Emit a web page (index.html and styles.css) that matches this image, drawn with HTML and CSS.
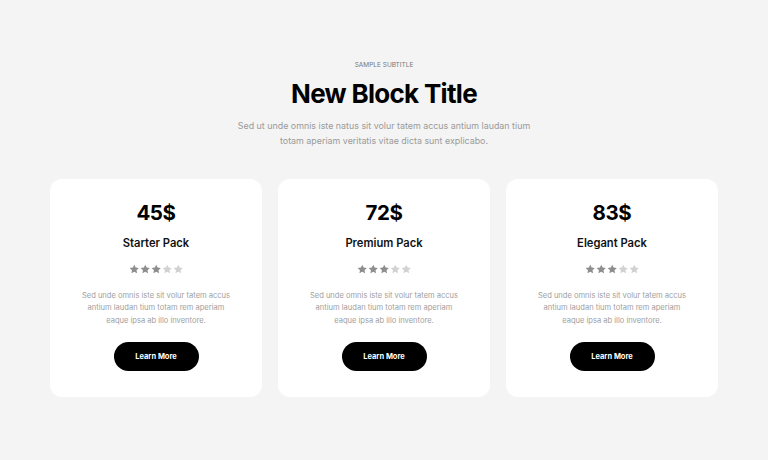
FILE: index.html
```html
<!DOCTYPE html>
<html>
<head>
<meta charset="utf-8">
<link rel="stylesheet" href="styles.css">
</head>
<body>
<svg width="0" height="0" class="defs">
  <defs>
    <symbol id="star" viewBox="0 0 24 24"><path d="M12 1.5l3.2 6.6 7.3 1-5.3 5 1.3 7.3L12 17.900l-6.5 3.5 1.3-7.3-5.3-5 7.3-1z"/></symbol>
  </defs>
</svg>
<section class="block">
  <header class="head">
    <p class="subtitle">SAMPLE SUBTITLE</p>
    <h1 class="title">New Block Title</h1>
    <p class="lead">Sed ut unde omnis iste natus sit volur tatem accus antium laudan tium<br>totam aperiam veritatis vitae dicta sunt explicabo.</p>
  </header>
  <div class="cards">
    <div class="card">
      <div class="price">45$</div>
      <div class="name">Starter Pack</div>
      <div class="stars"><svg class="on"><use href="#star"/></svg><svg class="on"><use href="#star"/></svg><svg class="on"><use href="#star"/></svg><svg><use href="#star"/></svg><svg><use href="#star"/></svg></div>
      <p class="desc">Sed unde omnis iste sit volur tatem accus<br>antium laudan tium totam rem aperiam<br>eaque ipsa ab illo inventore.</p>
      <a class="btn">Learn More</a>
    </div>
    <div class="card">
      <div class="price">72$</div>
      <div class="name">Premium Pack</div>
      <div class="stars"><svg class="on"><use href="#star"/></svg><svg class="on"><use href="#star"/></svg><svg class="on"><use href="#star"/></svg><svg><use href="#star"/></svg><svg><use href="#star"/></svg></div>
      <p class="desc">Sed unde omnis iste sit volur tatem accus<br>antium laudan tium totam rem aperiam<br>eaque ipsa ab illo inventore.</p>
      <a class="btn">Learn More</a>
    </div>
    <div class="card">
      <div class="price">83$</div>
      <div class="name">Elegant Pack</div>
      <div class="stars"><svg class="on"><use href="#star"/></svg><svg class="on"><use href="#star"/></svg><svg class="on"><use href="#star"/></svg><svg><use href="#star"/></svg><svg><use href="#star"/></svg></div>
      <p class="desc">Sed unde omnis iste sit volur tatem accus<br>antium laudan tium totam rem aperiam<br>eaque ipsa ab illo inventore.</p>
      <a class="btn">Learn More</a>
    </div>
  </div>
</section>
</body>
</html>
```
FILE: styles.css
```css
html, body {
  margin: 0;
  padding: 0;
  background: #f4f4f4;
  font-family: Inter, "Noto Sans", sans-serif;
}
.defs {
  position: absolute;
  width: 0;
  height: 0;
}
.block {
  width: 768px;
  height: 460px;
  box-sizing: border-box;
  padding: 61px 50px 0;
}
.head {
  text-align: center;
}
.subtitle {
  margin: 0;
  font-size: 6.5px;
  line-height: 9px;
  color: #777;
}
.title {
  margin: 7px 0 0;
  font-size: 26px;
  line-height: 34px;
  font-weight: 700;
  color: #000;
  letter-spacing: -0.7px;
}
.lead {
  margin: 7px 0 0;
  font-size: 8.9px;
  line-height: 15px;
  color: #9a9a9a;
}
.cards {
  margin-top: 31px;
  display: grid;
  grid-template-columns: repeat(3, 212px);
  gap: 16px;
}
.card {
  background: #fff;
  border-radius: 12px;
  height: 218px;
  box-sizing: border-box;
  padding: 20.5px 20px 0;
  display: flex;
  flex-direction: column;
  align-items: center;
  text-align: center;
}
.price {
  font-size: 20.5px;
  line-height: 26px;
  font-weight: 700;
  color: #000;
  letter-spacing: -0.4px;
}
.name {
  margin-top: 9px;
  font-size: 11.2px;
  line-height: 16px;
  font-weight: 600;
  color: #111;
}
.stars {
  margin-top: 13px;
  display: flex;
  gap: 0.5px;
  height: 10.5px;
}
.stars svg {
  width: 10.5px;
  height: 10.5px;
  fill: #d2d2d2;
}
.stars svg.on {
  fill: #8e8e8e;
}
.desc {
  margin: 15.5px 0 0;
  font-size: 7.55px;
  line-height: 12.5px;
  color: #a0a0a0;
  white-space: nowrap;
}
.btn {
  margin-top: 14.5px;
  width: 85px;
  height: 29px;
  border-radius: 15px;
  background: #000;
  color: #fff;
  font-size: 7.5px;
  font-weight: 700;
  display: flex;
  align-items: center;
  justify-content: center;
}
```
